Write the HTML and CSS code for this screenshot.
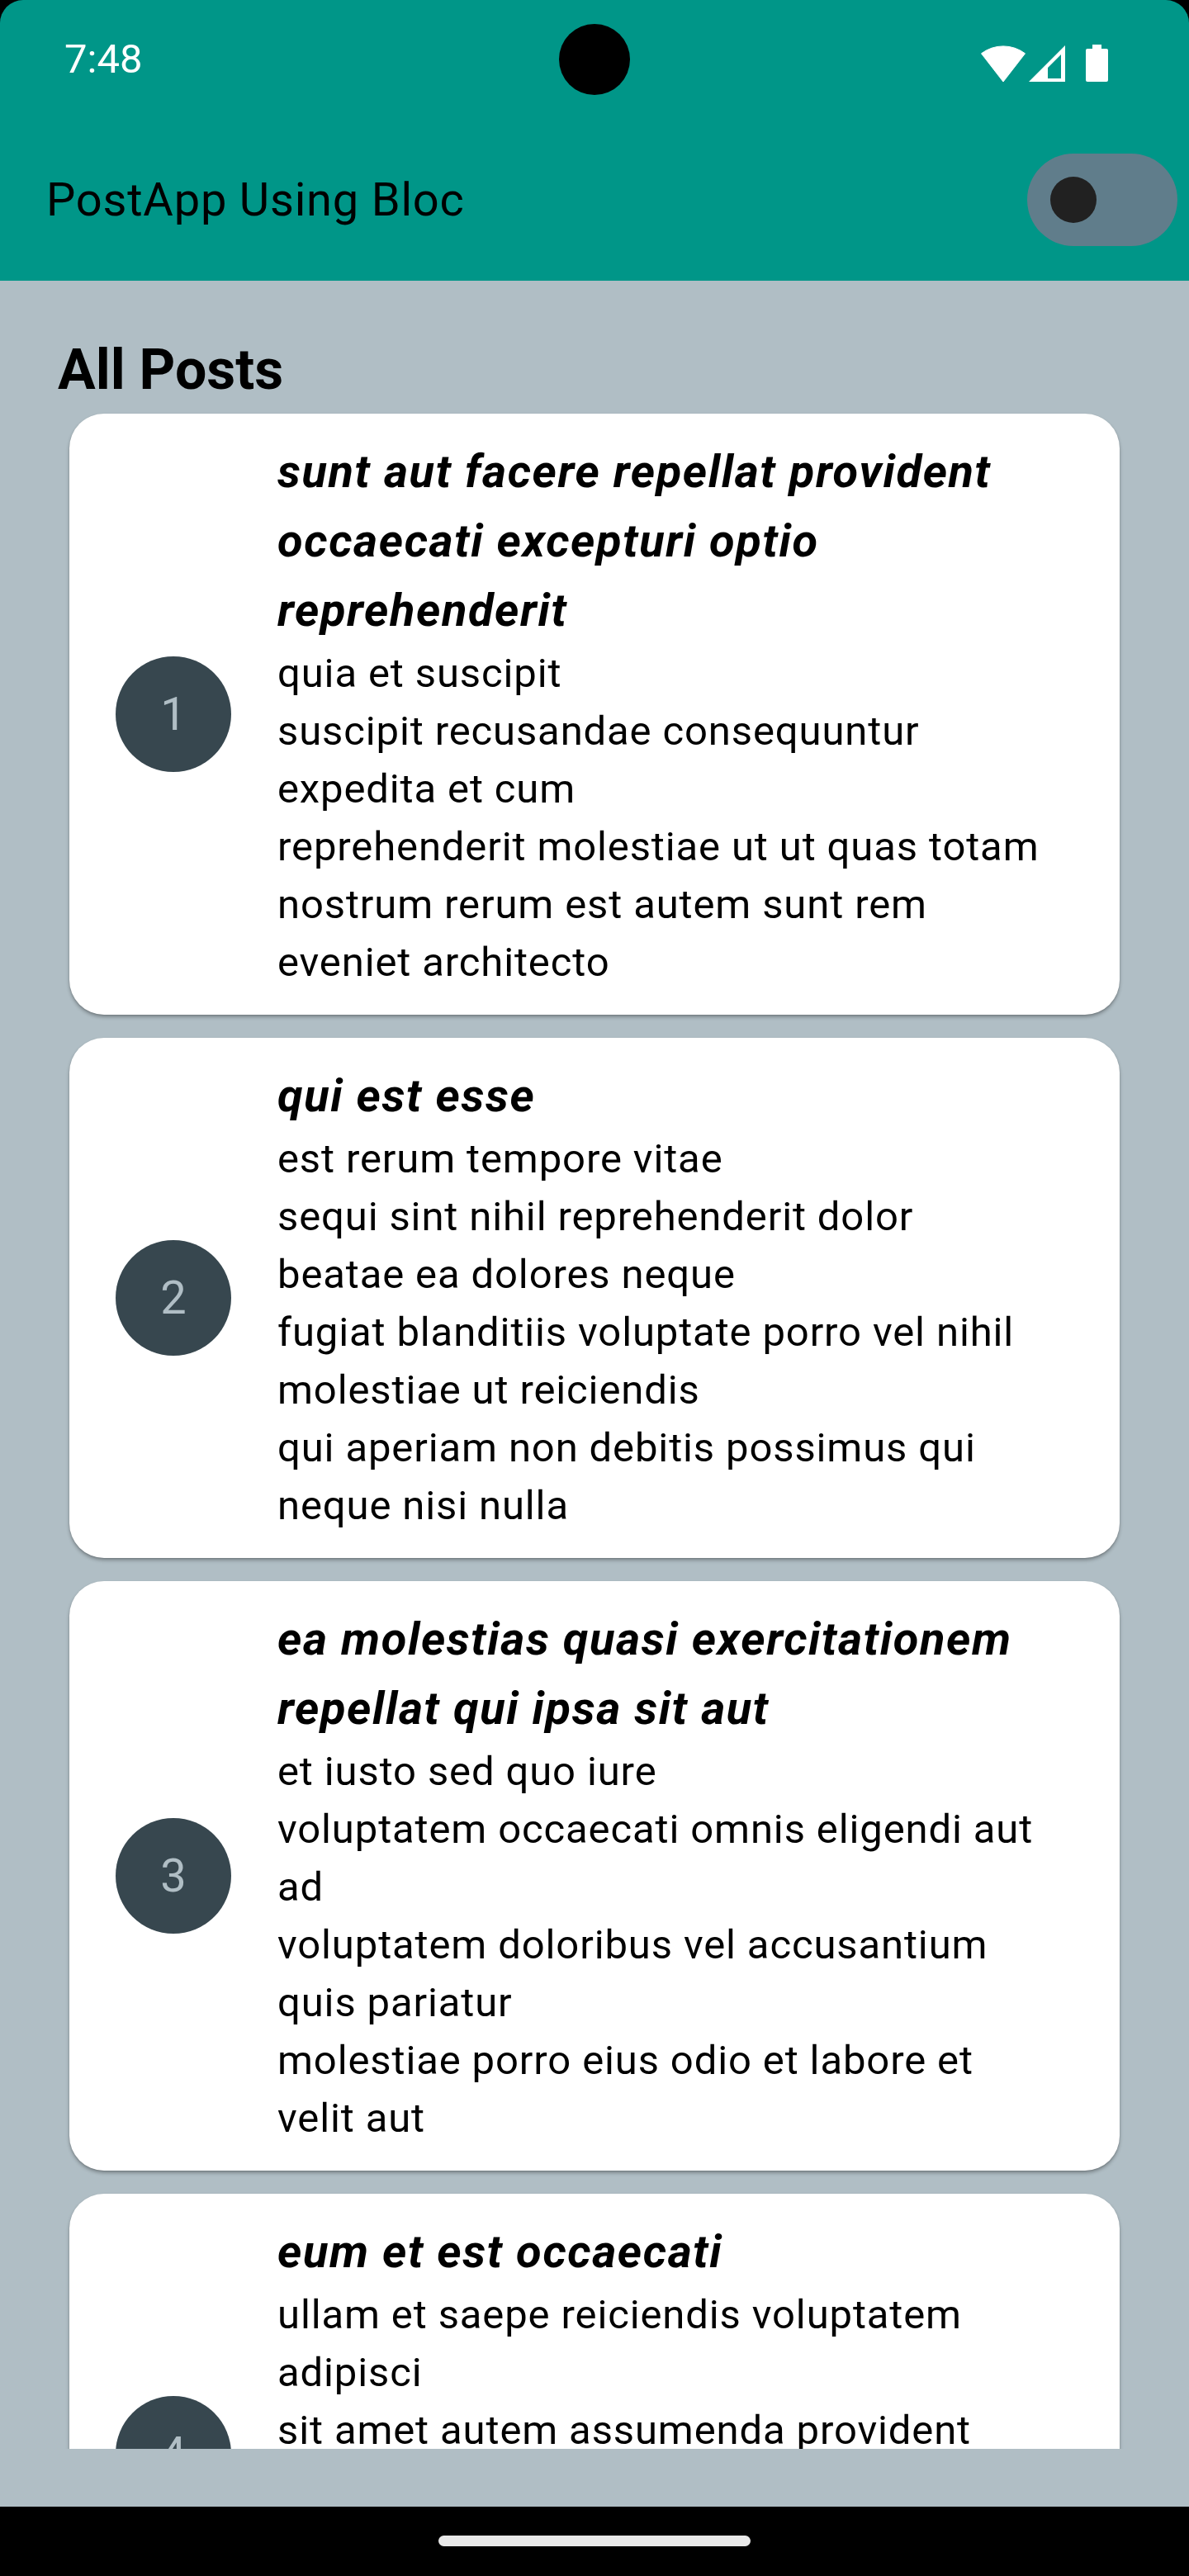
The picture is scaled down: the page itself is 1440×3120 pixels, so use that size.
FILE: index.html
```html
<!DOCTYPE html>
<html lang="en">
<head>
<meta charset="utf-8">
<title>PostApp Using Bloc</title>
<link rel="stylesheet" href="styles.css">
</head>
<body>
<div class="screen">
  <header class="appbar">
    <div class="statusbar">
      <span class="time">7:48</span>
      <div class="camera"></div>
      <div class="sys-icons">
        <svg class="ic-wifi" width="54" height="44" viewBox="0 0 54 44"><path d="M27 44 L0.5 9.8 A44 44 0 0 1 53.5 9.8 Z" fill="#fff" stroke="#fff" stroke-width="1" stroke-linejoin="round"/></svg>
        <svg class="ic-signal" width="44" height="44" viewBox="0 0 44 44"><path fill-rule="evenodd" d="M0 44 L44 0 L44 44 Z M23 27 L39 11 L39 40 L23 40 Z" fill="#fff"/></svg>
        <svg class="ic-battery" width="27" height="45" viewBox="0 0 27 45"><rect x="8" y="0" width="11" height="6" fill="#fff"/><rect x="0" y="5" width="27" height="40" rx="2" fill="#fff"/></svg>
      </div>
    </div>
    <div class="toolbar">
      <span class="app-title">PostApp Using Bloc</span>
      <div class="switch"><div class="thumb"></div></div>
    </div>
  </header>

  <main class="content">
    <h1 class="heading">All Posts</h1>
    <div class="list">
      <article class="card">
        <div class="avatar">1</div>
        <div class="post">
          <h2 class="post-title">sunt aut facere repellat provident occaecati excepturi optio reprehenderit</h2>
          <p class="post-body">quia et suscipit
suscipit recusandae consequuntur expedita et cum
reprehenderit molestiae ut ut quas totam
nostrum rerum est autem sunt rem eveniet architecto</p>
        </div>
      </article>
      <article class="card">
        <div class="avatar">2</div>
        <div class="post">
          <h2 class="post-title">qui est esse</h2>
          <p class="post-body">est rerum tempore vitae
sequi sint nihil reprehenderit dolor beatae ea dolores neque
fugiat blanditiis voluptate porro vel nihil molestiae ut reiciendis
qui aperiam non debitis possimus qui neque nisi nulla</p>
        </div>
      </article>
      <article class="card">
        <div class="avatar">3</div>
        <div class="post">
          <h2 class="post-title">ea molestias quasi exercitationem repellat qui ipsa sit aut</h2>
          <p class="post-body">et iusto sed quo iure
voluptatem occaecati omnis eligendi aut ad
voluptatem doloribus vel accusantium quis pariatur
molestiae porro eius odio et labore et velit aut</p>
        </div>
      </article>
      <article class="card">
        <div class="avatar">4</div>
        <div class="post">
          <h2 class="post-title">eum et est occaecati</h2>
          <p class="post-body">ullam et saepe reiciendis voluptatem adipisci
sit amet autem assumenda provident rerum culpa
quis hic commodi nesciunt rem tenetur doloremque ipsam iure
quis sunt voluptatem rerum illo velit</p>
        </div>
      </article>
    </div>
  </main>

  <footer class="navbar"><div class="pill"></div></footer>
</div>
</body>
</html>
```

FILE: styles.css
```css
* { box-sizing: border-box; }

html, body {
  margin: 0;
  padding: 0;
  background: #000;
}

.screen {
  width: 1440px;
  height: 3120px;
  display: flex;
  flex-direction: column;
  background: #000;
  font-family: Roboto, "Noto Sans", "Liberation Sans", sans-serif;
  overflow: hidden;
}

/* ---------- app bar ---------- */
.appbar {
  background: #009688;
  height: 340px;
  flex: none;
  border-radius: 28px 28px 0 0;
  display: flex;
  flex-direction: column;
}

.statusbar {
  position: relative;
  height: 144px;
  display: flex;
  align-items: flex-start;
  justify-content: space-between;
  padding: 44px 98px 0 78px;
}

.time {
  color: #fff;
  font-size: 49px;
  line-height: 56px;
}

.camera {
  position: absolute;
  left: 677px;
  top: 29px;
  width: 86px;
  height: 86px;
  border-radius: 50%;
  background: #000;
}

.sys-icons {
  display: flex;
  align-items: flex-end;
  height: 50px;
  margin-top: 5px;
}

.ic-wifi { display: block; margin-right: 4px; }
.ic-signal { display: block; margin-right: 25px; }
.ic-battery { display: block; }

.toolbar {
  height: 196px;
  display: flex;
  align-items: center;
  justify-content: space-between;
  padding: 0 14px 0 56px;
}

.app-title {
  color: #000;
  font-size: 56px;
  line-height: 66px;
  letter-spacing: 0.8px;
}

.switch {
  width: 182px;
  height: 112px;
  border-radius: 56px;
  background: #607d8b;
  display: flex;
  align-items: center;
  padding-left: 28px;
}

.thumb {
  width: 56px;
  height: 56px;
  border-radius: 50%;
  background: #212121;
}

/* ---------- content ---------- */
.content {
  flex: 1;
  min-height: 0;
  background: #b0bec5;
  padding: 70px;
  display: flex;
  flex-direction: column;
}

.heading {
  margin: 0;
  font-size: 68px;
  line-height: 77px;
  font-weight: 700;
  color: #000;
}

.list {
  flex: 1;
  min-height: 0;
  overflow: hidden;
  display: flex;
  flex-direction: column;
}

.card {
  flex: none;
  margin: 14px;
  background: #fff;
  border-radius: 42px;
  box-shadow: 0 3px 4px rgba(0, 0, 0, 0.28), 0 1px 2px rgba(0, 0, 0, 0.12);
  padding: 28px 84px 28px 56px;
  display: flex;
  align-items: center;
  gap: 56px;
}

.avatar {
  flex: none;
  width: 140px;
  height: 140px;
  border-radius: 50%;
  background: #37474f;
  color: #b0bec5;
  font-size: 56px;
  display: flex;
  align-items: center;
  justify-content: center;
}

.post {
  flex: 1;
  min-width: 0;
}

.post-title {
  margin: 0;
  font-size: 56px;
  line-height: 84px;
  font-weight: 700;
  font-style: italic;
  color: #000;
  letter-spacing: 1.6px;
}

.post-body {
  margin: 0;
  font-size: 49px;
  line-height: 70px;
  color: #000;
  white-space: pre-line;
  letter-spacing: 0.875px;
}

/* ---------- nav bar ---------- */
.navbar {
  height: 84px;
  flex: none;
  background: #000;
  display: flex;
  justify-content: center;
  padding-top: 35px;
}

.pill {
  width: 378px;
  height: 13px;
  border-radius: 7px;
  background: #e8e8e8;
}
```
